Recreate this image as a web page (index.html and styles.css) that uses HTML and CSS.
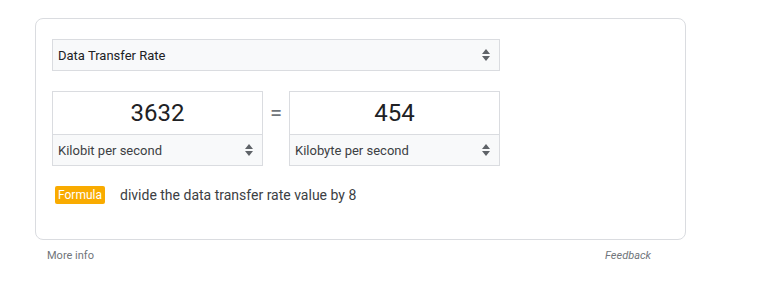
FILE: index.html
```html
<!DOCTYPE html>
<html>
<head>
<meta charset="utf-8">
<link rel="stylesheet" href="styles.css">
</head>
<body>
<div class="wrap">
  <div class="card">
    <div class="select main-select">
      <span>Data Transfer Rate</span>
      <svg class="arrows" width="8" height="12" viewBox="0 0 8 12"><path d="M0 5 L4 0 L8 5 Z M0 7 L8 7 L4 12 Z" fill="#5f6368"/></svg>
    </div>
    <div class="conv">
      <div class="box">
        <div class="num">3632</div>
        <div class="select unit">
          <span>Kilobit per second</span>
          <svg class="arrows" width="8" height="12" viewBox="0 0 8 12"><path d="M0 5 L4 0 L8 5 Z M0 7 L8 7 L4 12 Z" fill="#5f6368"/></svg>
        </div>
      </div>
      <div class="eq">=</div>
      <div class="box">
        <div class="num">454</div>
        <div class="select unit">
          <span>Kilobyte per second</span>
          <svg class="arrows" width="8" height="12" viewBox="0 0 8 12"><path d="M0 5 L4 0 L8 5 Z M0 7 L8 7 L4 12 Z" fill="#5f6368"/></svg>
        </div>
      </div>
    </div>
    <div class="formula">
      <span class="badge">Formula</span>
      <span class="ftext">divide the data transfer rate value by 8</span>
    </div>
  </div>
  <div class="footer">
    <span class="more">More info</span>
    <span class="feedback">Feedback</span>
  </div>
</div>
</body>
</html>
```
FILE: styles.css
```css
html, body {
  margin: 0;
  padding: 0;
  background: #fff;
  font-family: Roboto, "Liberation Sans", Arial, sans-serif;
  color: #202124;
}
.wrap {
  padding: 18px 0 0 35px;
  width: 651px;
}
.card {
  box-sizing: border-box;
  width: 651px;
  height: 222px;
  border: 1px solid #dadce0;
  border-radius: 8px;
  padding: 20px 16px 0 16px;
}
.select {
  box-sizing: border-box;
  display: flex;
  align-items: center;
  justify-content: space-between;
  background: #f8f9fa;
  border: 1px solid #dadce0;
  font-size: 13px;
  color: #202124;
}
.main-select {
  width: 448px;
  height: 32px;
  padding: 0 9px 0 5px;
}
.arrows {
  display: block;
}
.conv {
  display: flex;
  align-items: flex-start;
  margin-top: 20px;
  width: 448px;
}
.box {
  box-sizing: border-box;
  width: 211px;
  height: 75px;
  border: 1px solid #dadce0;
  display: flex;
  flex-direction: column;
}
.num {
  height: 42px;
  display: flex;
  align-items: center;
  justify-content: center;
  font-size: 24px;
  color: #202124;
  border-bottom: 1px solid #dadce0;
}
.unit {
  border: none;
  flex: 1;
  padding: 0 9px 0 5px;
  color: #3c4043;
}
.eq {
  width: 26px;
  text-align: center;
  font-size: 22px;
  color: #70757a;
  line-height: 44px;
}
.formula {
  display: flex;
  align-items: center;
  margin-top: 20px;
  padding-left: 3px;
}
.badge {
  background: #f9ab00;
  color: #fff;
  font-size: 12px;
  line-height: 18px;
  padding: 0 3px;
  border-radius: 2px;
}
.ftext {
  margin-left: 15px;
  font-size: 14px;
  color: #3c4043;
}
.footer {
  display: flex;
  justify-content: space-between;
  padding: 9px 35px 0 12px;
  font-size: 11px;
  color: #70757a;
}
.feedback {
  font-style: italic;
}
```
